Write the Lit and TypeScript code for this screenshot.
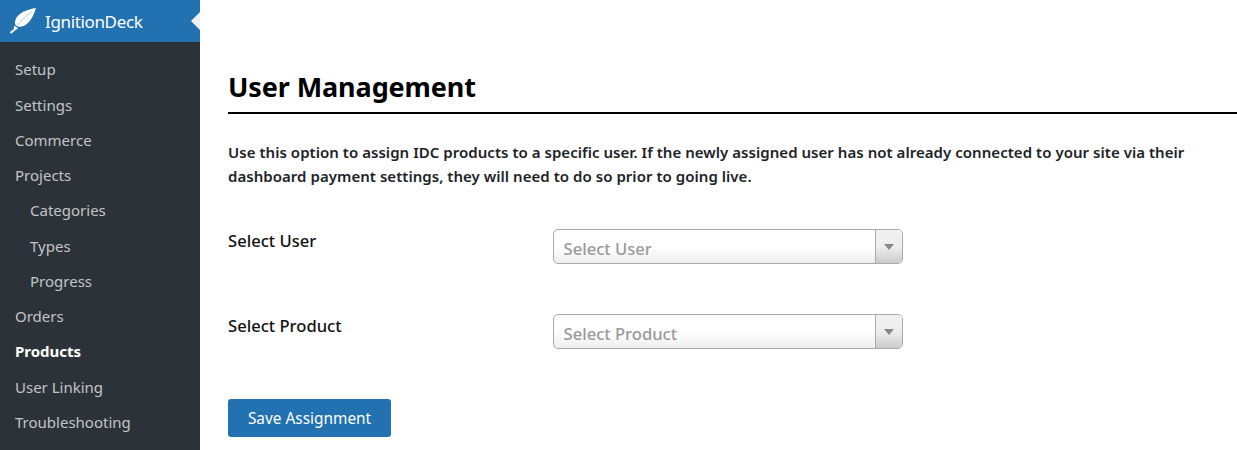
import { html, css, LitElement } from 'lit';
import { customElement } from 'lit/decorators.js';

const MENU = [
  { label: 'Setup' },
  { label: 'Settings' },
  { label: 'Commerce' },
  { label: 'Projects' },
  { label: 'Categories', sub: true },
  { label: 'Types', sub: true },
  { label: 'Progress', sub: true },
  { label: 'Orders' },
  { label: 'Products', active: true },
  { label: 'User Linking' },
  { label: 'Troubleshooting' },
];

@customElement('app-root')
export class AppRoot extends LitElement {
  static styles = css`
    :host {
      display: flex;
      width: 1237px;
      height: 450px;
      overflow: hidden;
      background: #fff;
      font-family: 'Noto Sans', 'Open Sans', sans-serif;
      color: #000;
    }

    .sidebar {
      width: 200px;
      flex: none;
      background: #2c3338;
      color: #c3c4c7;
    }
    .brand {
      height: 42px;
      display: flex;
      align-items: center;
      gap: 7px;
      padding-left: 9px;
      position: relative;
      background: #2271b1;
      color: #fff;
      font-size: 17px;
      letter-spacing: -0.35px;
    }
    .brand svg {
      width: 29px;
      height: 28px;
      flex: none;
    }
    .brand::after {
      content: '';
      position: absolute;
      right: 0;
      top: 12px;
      border: 9px solid transparent;
      border-right-color: #f0f0f1;
      border-left-width: 0;
    }
    .menu {
      list-style: none;
      margin: 0;
      padding: 10.3px 0 0;
    }
    .menu li {
      height: 35.25px;
      line-height: 35px;
      padding-left: 15px;
      font-size: 15px;
      white-space: nowrap;
    }
    .menu li.sub {
      padding-left: 30px;
    }
    .menu li.active {
      color: #fff;
      font-weight: 700;
    }

    .main {
      flex: 1;
      min-width: 0;
      padding: 68px 0 0 28px;
    }
    h1 {
      margin: 0;
      height: 44px;
      line-height: 38px;
      font-size: 27px;
      font-weight: 700;
      letter-spacing: -0.1px;
      border-bottom: 2px solid #000;
    }
    .intro {
      margin: 26px 0 0;
      font-size: 15px;
      font-weight: 600;
      line-height: 24px;
      letter-spacing: 0.04px;
      color: #1d2327;
      width: 975px;
    }
    .rows {
      margin-top: 41px;
      display: flex;
      flex-direction: column;
      gap: 51px;
    }
    .row {
      display: flex;
      height: 34px;
    }
    .row label {
      width: 325px;
      flex: none;
      font-size: 16.6px;
      font-weight: 500;
      line-height: 24px;
      color: #111;
    }
    .select {
      width: 350px;
      height: 35px;
      box-sizing: border-box;
      display: flex;
      border: 1px solid #aaa;
      border-radius: 5px;
      overflow: hidden;
      background: linear-gradient(#fff 0%, #fff 50%, #eee 100%);
    }
    .select span {
      flex: 1;
      padding-left: 9.5px;
      line-height: 37px;
      font-size: 16.6px;
      font-weight: 500;
      color: #999;
    }
    .select i {
      width: 26px;
      flex: none;
      display: flex;
      align-items: center;
      justify-content: center;
      border-left: 1px solid #aaa;
      background: linear-gradient(#f0f0f0 0%, #eee 50%, #ccc 100%);
    }
    .select i::after {
      content: '';
      border: 5px solid transparent;
      border-top: 6px solid #888;
      border-bottom-width: 0;
    }
    button {
      display: block;
      margin-top: 51px;
      width: 163px;
      height: 38px;
      padding: 0;
      border: none;
      border-radius: 3px;
      background: #2271b1;
      color: #fff;
      font: inherit;
      font-size: 15.4px;
    }
  `;

  render() {
    return html`
      <aside class="sidebar">
        <div class="brand">
          <svg viewBox="9 7 29 28">
            <path
              fill="#fff"
              d="M36 8C28 9 20 12.500 16.500 17.500 15 20 14.500 23 15.500 25L17.500 26.500C21 27.500 25 26 28.500 22.500 32 18.500 34.500 13 36 8Z"
            />
            <path
              fill="#fff"
              d="M14.500 25.500L18 28.500 15.500 30 11.500 33.500 10 33 10.500 31.500 13.500 29.500Z"
            />
            <path
              fill="none"
              stroke="#9cc3e0"
              stroke-width="0.8"
              d="M16 26.500C20 22 25 17 32 11.500"
            />
          </svg>
          IgnitionDeck
        </div>
        <ul class="menu">
          ${MENU.map(
            (m) =>
              html`<li class="${m.sub ? 'sub' : ''} ${m.active ? 'active' : ''}">${m.label}</li>`
          )}
        </ul>
      </aside>
      <main class="main">
        <h1>User Management</h1>
        <p class="intro">
          Use this option to assign IDC products to a specific user. If the newly assigned user has not already
          connected to your site via their dashboard payment settings, they will need to do so prior to going live.
        </p>
        <div class="rows">
          <div class="row">
            <label>Select User</label>
            <div class="select"><span>Select User</span><i></i></div>
          </div>
          <div class="row">
            <label>Select Product</label>
            <div class="select"><span>Select Product</span><i></i></div>
          </div>
        </div>
        <button>Save Assignment</button>
      </main>
    `;
  }
}
